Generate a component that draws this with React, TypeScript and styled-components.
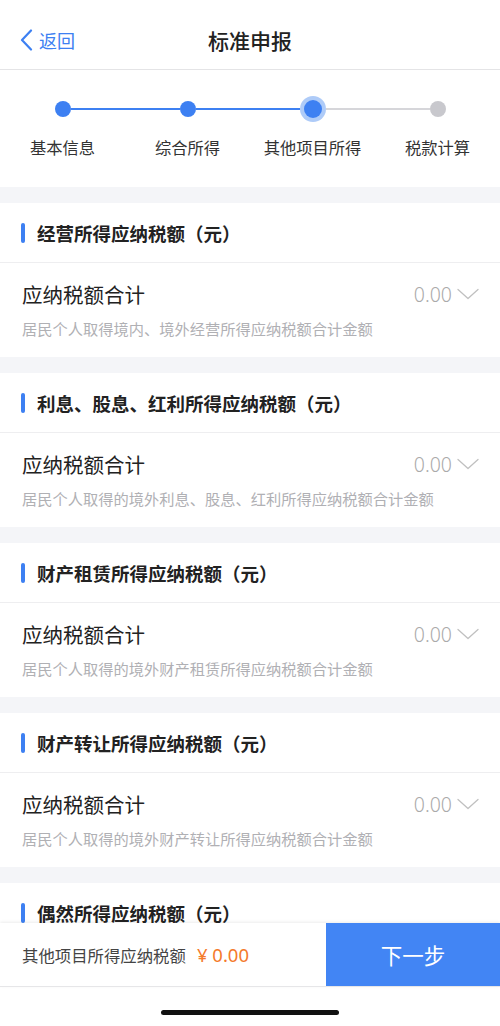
import React from 'react';
import styled, { createGlobalStyle } from 'styled-components';

const GlobalStyle = createGlobalStyle`
    html, body {
        margin: 0;
        padding: 0;
        background: #ffffff;
    }
    body {
        font-family: "Noto Sans CJK SC", "Noto Sans", "Liberation Sans", sans-serif;
        -webkit-font-smoothing: antialiased;
    }
    * { box-sizing: border-box; }
`;

const steps = ['基本信息', '综合所得', '其他项目所得', '税款计算'];
const currentStep = 2;

// the last card is cut by the bottom bar, so only its header shows
const sections = [
    { title: '经营所得应纳税额（元）', desc: '居民个人取得境内、境外经营所得应纳税额合计金额' },
    { title: '利息、股息、红利所得应纳税额（元）', desc: '居民个人取得的境外利息、股息、红利所得应纳税额合计金额' },
    { title: '财产租赁所得应纳税额（元）', desc: '居民个人取得的境外财产租赁所得应纳税额合计金额' },
    { title: '财产转让所得应纳税额（元）', desc: '居民个人取得的境外财产转让所得应纳税额合计金额' },
    { title: '偶然所得应纳税额（元）', desc: '' },
];

const BackChevron = () => (
    <svg width="13" height="22" viewBox="0 0 13 22" fill="none">
        <path d="M11 1.5 L2 11 L11 20.5" stroke="#3d80f2" strokeWidth="2.2" strokeLinecap="round" strokeLinejoin="round" />
    </svg>
);

const DownChevron = () => (
    <svg width="22" height="12" viewBox="0 0 22 12" fill="none">
        <path d="M1 1.5 L11 10.5 L21 1.5" stroke="#c0c0c0" strokeWidth="1.3" strokeLinecap="round" strokeLinejoin="round" />
    </svg>
);

const App: React.FC = () => {
    return (
        <>
            <GlobalStyle />
            <Page>
                <NavBar>
                    <BackButton>
                        <BackChevron />
                        <span>返回</span>
                    </BackButton>
                    <NavTitle>标准申报</NavTitle>
                    <NavSpacer />
                </NavBar>

                <Scroll>
                    <Stepper>
                        {steps.map((label, i) => (
                            <Step key={label}>
                                <Track>
                                    <Line $hidden={i === 0} $done={i <= currentStep} />
                                    <Dot $state={i < currentStep ? 'done' : i === currentStep ? 'active' : 'todo'} />
                                    <Line $hidden={i === steps.length - 1} $done={i < currentStep} />
                                </Track>
                                <StepLabel>{label}</StepLabel>
                            </Step>
                        ))}
                    </Stepper>

                    {sections.map((s) => (
                        <Card key={s.title}>
                            <CardHeader>
                                <Marker />
                                <CardTitle>{s.title}</CardTitle>
                            </CardHeader>
                            {s.desc && (
                                <Row>
                                    <RowTop>
                                        <RowLabel>应纳税额合计</RowLabel>
                                        <RowValue>
                                            <span>0.00</span>
                                            <DownChevron />
                                        </RowValue>
                                    </RowTop>
                                    <RowDesc>{s.desc}</RowDesc>
                                </Row>
                            )}
                        </Card>
                    ))}
                </Scroll>

                <BottomBar>
                    <Summary>
                        <SummaryLabel>其他项目所得应纳税额</SummaryLabel>
                        <SummaryAmount>¥ 0.00</SummaryAmount>
                    </Summary>
                    <NextButton>下一步</NextButton>
                </BottomBar>
                <HomeArea>
                    <HomeIndicator />
                </HomeArea>
            </Page>
        </>
    );
};

// --- STYLED COMPONENTS ---
const Page = styled.div`
    display: flex;
    flex-direction: column;
    height: 100vh;
    background: #f4f5f8;
    overflow: hidden;
`;

const NavBar = styled.header`
    flex: 0 0 70px;
    display: flex;
    align-items: center;
    padding: 10px 20px 0;
    background: #ffffff;
    border-bottom: 1px solid #e4e4e6;
`;

const BackButton = styled.div`
    width: 90px;
    display: flex;
    align-items: center;
    gap: 6px;
    color: #3d80f2;
    font-size: 18px;
`;

const NavTitle = styled.h1`
    flex: 1;
    margin: 0;
    text-align: center;
    font-size: 21px;
    font-weight: 500;
    color: #222;
`;

const NavSpacer = styled.div`
    width: 90px;
`;

const Scroll = styled.main`
    flex: 1;
    overflow: hidden;
    display: flex;
    flex-direction: column;
    gap: 16px;
`;

const Stepper = styled.div`
    flex: 0 0 117px;
    display: grid;
    grid-template-columns: repeat(4, 1fr);
    background: #ffffff;
    padding-top: 26px;
`;

const Step = styled.div`
    display: flex;
    flex-direction: column;
    align-items: center;
`;

const Track = styled.div`
    width: 100%;
    height: 26px;
    display: flex;
    align-items: center;
`;

const Line = styled.div<{ $hidden: boolean; $done: boolean }>`
    flex: 1;
    height: 2px;
    background: ${({ $hidden, $done }) => ($hidden ? 'transparent' : $done ? '#3d80f2' : '#d6d6da')};
`;

const Dot = styled.div<{ $state: 'done' | 'active' | 'todo' }>`
    flex: 0 0 auto;
    width: ${({ $state }) => ($state === 'active' ? '18px' : '16px')};
    height: ${({ $state }) => ($state === 'active' ? '18px' : '16px')};
    border-radius: 50%;
    background: ${({ $state }) => ($state === 'todo' ? '#c8c8cd' : '#3d80f2')};
    box-shadow: ${({ $state }) => ($state === 'active' ? '0 0 0 4px #aecbf8' : 'none')};
    margin: 0 ${({ $state }) => ($state === 'active' ? '4px' : '0')};
`;

const StepLabel = styled.div`
    margin-top: 13px;
    font-size: 16.3px;
    color: #333;
    white-space: nowrap;
`;

const Card = styled.section`
    flex: 0 0 154px;
    background: #ffffff;
`;

const CardHeader = styled.div`
    height: 60px;
    display: flex;
    align-items: center;
    gap: 12px;
    padding: 0 21px;
    border-bottom: 1px solid #eeeef0;
`;

const Marker = styled.span`
    width: 4px;
    height: 20px;
    border-radius: 2px;
    background: #3d80f2;
`;

const CardTitle = styled.h2`
    margin: 0;
    font-size: 18.5px;
    font-weight: 700;
    color: #222;
`;

const Row = styled.div`
    padding: 16px 22px 0;
`;

const RowTop = styled.div`
    display: flex;
    align-items: center;
    justify-content: space-between;
`;

const RowLabel = styled.div`
    font-size: 20.5px;
    color: #222;
`;

const RowValue = styled.div`
    display: flex;
    align-items: center;
    gap: 5px;
    font-family: "Noto Sans", "Liberation Sans", sans-serif;
    font-size: 19.5px;
    font-weight: 300;
    color: #aaaaaa;
    margin-right: -1px;
`;

const RowDesc = styled.div`
    margin-top: 8px;
    font-size: 15.25px;
    color: #b0b0b4;
`;

const BottomBar = styled.footer`
    flex: 0 0 64px;
    display: flex;
    background: #ffffff;
    box-shadow: 0 -1px 3px rgba(0, 0, 0, 0.08);
    border-bottom: 1px solid #e6e6e8;
    z-index: 1;
`;

const Summary = styled.div`
    flex: 1;
    display: flex;
    align-items: center;
    gap: 11px;
    padding-left: 22px;
`;

const SummaryLabel = styled.span`
    font-size: 16.4px;
    color: #444;
`;

const SummaryAmount = styled.span`
    font-family: "Noto Sans", "Liberation Sans", sans-serif;
    font-size: 18.5px;
    color: #f47a2b;
`;

const NextButton = styled.button`
    flex: 0 0 174px;
    border: none;
    background: #4285f4;
    color: #ffffff;
    font-family: inherit;
    font-size: 21.5px;
    cursor: pointer;
`;

const HomeArea = styled.div`
    flex: 0 0 39px;
    display: flex;
    justify-content: center;
    align-items: flex-start;
    padding-top: 23px;
    background: #ffffff;
`;

const HomeIndicator = styled.div`
    width: 178px;
    height: 5px;
    border-radius: 3px;
    background: #111;
`;

export default App;
